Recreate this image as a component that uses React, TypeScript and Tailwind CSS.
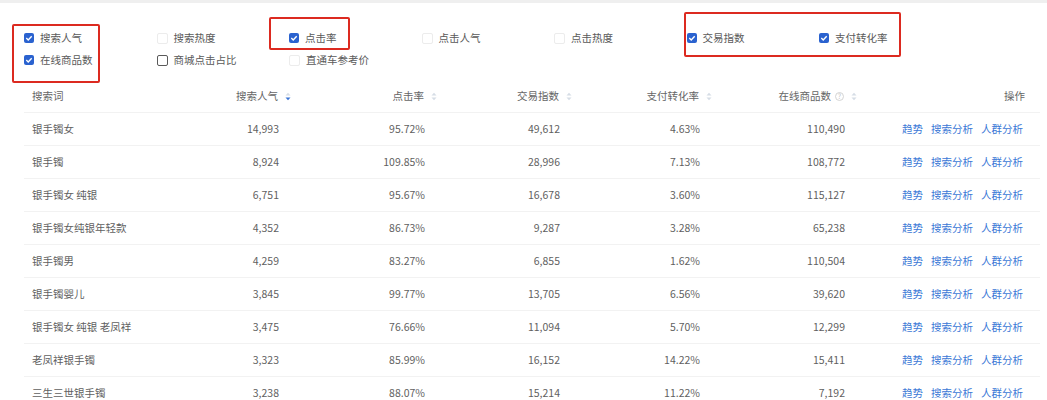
type Opt = { label: string; state: "on" | "off" | "faint" };

const ROW1: Opt[] = [
  { label: "搜索人气", state: "on" },
  { label: "搜索热度", state: "faint" },
  { label: "点击率", state: "on" },
  { label: "点击人气", state: "faint" },
  { label: "点击热度", state: "faint" },
  { label: "交易指数", state: "on" },
  { label: "支付转化率", state: "on" },
];

const ROW2: Opt[] = [
  { label: "在线商品数", state: "on" },
  { label: "商城点击占比", state: "off" },
  { label: "直通车参考价", state: "faint" },
];

const ROWS: [string, string, string, string, string, string][] = [
  ["银手镯女", "14,993", "95.72%", "49,612", "4.63%", "110,490"],
  ["银手镯", "8,924", "109.85%", "28,996", "7.13%", "108,772"],
  ["银手镯女 纯银", "6,751", "95.67%", "16,678", "3.60%", "115,127"],
  ["银手镯女纯银年轻款", "4,352", "86.73%", "9,287", "3.28%", "65,238"],
  ["银手镯男", "4,259", "83.27%", "6,855", "1.62%", "110,504"],
  ["银手镯婴儿", "3,845", "99.77%", "13,705", "6.56%", "39,620"],
  ["银手镯女 纯银 老凤祥", "3,475", "76.66%", "11,094", "5.70%", "12,299"],
  ["老凤祥银手镯", "3,323", "85.99%", "16,152", "14.22%", "15,411"],
  ["三生三世银手镯", "3,238", "88.07%", "15,214", "11.22%", "7,192"],
];

// keyword column, then the five number columns (right edges at 291/437/572/712/857)
const COL = ["w-[120px]", "w-[147px]", "w-[146px]", "w-[135px]", "w-[140px]", "w-[145px]"];

function Box({ state }: { state: Opt["state"] }) {
  if (state === "on") {
    return (
      <span className="w-[10px] h-[10px] rounded-[2px] bg-[#2a62cf] flex items-center justify-center shrink-0">
        <svg width="8" height="8" viewBox="0 0 8 8">
          <path d="M1.3 4.1 L3.2 5.9 L6.7 2.2" fill="none" stroke="#fff" strokeWidth="1.4" />
        </svg>
      </span>
    );
  }
  const border = state === "off" ? "border-[#5a5a5a]" : "border-[#ececec]";
  return <span className={`w-[11px] h-[11px] rounded-[2px] border bg-white shrink-0 ${border}`} />;
}

function Check({ opt }: { opt: Opt }) {
  return (
    <div className="w-[132.5px] flex items-center gap-[6px] h-[22px]">
      <Box state={opt.state} />
      <span className="text-[10.5px] text-[#5a5a5a]">{opt.label}</span>
    </div>
  );
}

function Sorter({ active }: { active?: boolean }) {
  return (
    <svg width="6" height="9" viewBox="0 0 6 9" className="ml-[7px] shrink-0">
      <path d="M0.5 3.5 L3 0.8 L5.5 3.5 Z" fill="#d6dde6" />
      <path d="M0.5 5.5 L3 8.2 L5.5 5.5 Z" fill={active ? "#3a74d6" : "#d6dde6"} />
    </svg>
  );
}

function Info() {
  return (
    <span className="ml-[4px] w-[9px] h-[9px] rounded-full border border-[#d4d4d4] text-[7px] leading-none text-[#c4c4c4] flex items-center justify-center shrink-0">
      ?
    </span>
  );
}

const redBox = "absolute border-2 border-[#dc2a20] rounded-[2px]";
const rowCls = "h-[33px] flex items-center border-b border-[#f2f2f2] text-[10.5px]";

export default function App() {
  return (
    <div
      className="relative w-[1047px] h-[400px] overflow-hidden bg-white border-t-[3px] border-[#efefef]"
      style={{ fontFamily: '"Noto Sans CJK SC", "Noto Sans", sans-serif' }}
    >
      {/* metric picker */}
      <div className="pl-[24px] pt-[24px] flex flex-col">
        <div className="flex">
          {ROW1.map((o) => (
            <Check key={o.label} opt={o} />
          ))}
        </div>
        <div className="flex">
          {ROW2.map((o) => (
            <Check key={o.label} opt={o} />
          ))}
        </div>
      </div>

      {/* table */}
      <div className="mt-[9px] ml-[24px] mr-[7px] flex flex-col">
        <div className={`${rowCls} text-[#666]`}>
          <div className={`${COL[0]} pl-[8px]`}>搜索词</div>
          <div className={`${COL[1]} flex items-center justify-end`}>
            搜索人气<Sorter active />
          </div>
          <div className={`${COL[2]} flex items-center justify-end`}>
            点击率<Sorter />
          </div>
          <div className={`${COL[3]} flex items-center justify-end`}>
            交易指数<Sorter />
          </div>
          <div className={`${COL[4]} flex items-center justify-end`}>
            支付转化率<Sorter />
          </div>
          <div className={`${COL[5]} flex items-center justify-end`}>
            在线商品数<Info />
            <Sorter />
          </div>
          <div className="flex-1 text-right pr-[15px]">操作</div>
        </div>

        {ROWS.map((r) => (
          <div key={r[0]} className={`${rowCls} text-[#5f5f5f]`}>
            <div className={`${COL[0]} pl-[8px] whitespace-nowrap`}>{r[0]}</div>
            {r.slice(1).map((v, i) => (
              <div key={i} className={`${COL[i + 1]} text-right pr-[12px]`}>
                {v}
              </div>
            ))}
            <div className="flex-1 flex justify-end gap-[8px] pr-[17px] text-[#3b78d6] whitespace-nowrap">
              <span>趋势</span>
              <span>搜索分析</span>
              <span>人群分析</span>
            </div>
          </div>
        ))}
      </div>

      {/* annotation boxes */}
      <div className={`${redBox} left-[12px] top-[21px] w-[88px] h-[59px]`} />
      <div className={`${redBox} left-[269px] top-[14px] w-[81px] h-[33px]`} />
      <div className={`${redBox} left-[684px] top-[9px] w-[217px] h-[45px]`} />
    </div>
  );
}
